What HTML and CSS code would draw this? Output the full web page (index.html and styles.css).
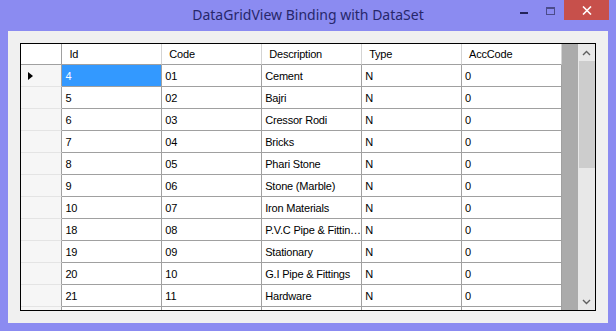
FILE: index.html
```html
<!DOCTYPE html>
<html lang="en">
<head>
    <meta charset="UTF-8">
    <meta name="viewport" content="width=device-width, initial-scale=1.0">
    <title>DataGridView Binding with DataSet</title>
    <link rel="stylesheet" href="styles.css">
</head>
<body>
    <div class="window">
        <div class="title-bar">
            <div class="spacer"></div>
            <div class="title">DataGridView Binding with DataSet</div>
            <div class="controls">
                <span class="btn-min"><i></i></span>
                <span class="btn-max"><i></i></span>
                <span class="btn-close">
                    <svg width="10" height="9" viewBox="0 0 10 9"><path d="M1 0.5 L9 8.5 M9 0.5 L1 8.5" stroke="#fff" stroke-width="1.6"/></svg>
                </span>
            </div>
        </div>
        <div class="client">
            <div class="grid">
                <div class="grid-body">
                    <table id="itemTable">
                        <thead>
                            <tr>
                                <th class="corner"></th>
                                <th>Id</th>
                                <th>Code</th>
                                <th>Description</th>
                                <th>Type</th>
                                <th>AccCode</th>
                            </tr>
                        </thead>
                        <tbody></tbody>
                    </table>
                </div>
                <div class="vscroll">
                    <div class="arrow">
                        <svg width="9" height="6" viewBox="0 0 9 6"><path d="M1 5 L4.5 1.5 L8 5" fill="none" stroke="#606060" stroke-width="1.4"/></svg>
                    </div>
                    <div class="track"><div class="thumb"></div></div>
                    <div class="arrow">
                        <svg width="9" height="6" viewBox="0 0 9 6"><path d="M1 1 L4.5 4.5 L8 1" fill="none" stroke="#606060" stroke-width="1.4"/></svg>
                    </div>
                </div>
            </div>
        </div>
    </div>
    <script>
    const items = [
        [4, '01', 'Cement'],
        [5, '02', 'Bajri'],
        [6, '03', 'Cressor Rodi'],
        [7, '04', 'Bricks'],
        [8, '05', 'Phari Stone'],
        [9, '06', 'Stone (Marble)'],
        [10, '07', 'Iron Materials'],
        [18, '08', 'P.V.C Pipe & Fittings'],
        [19, '09', 'Stationary'],
        [20, '10', 'G.I Pipe & Fittings'],
        [21, '11', 'Hardware']
    ];

    const tbody = document.querySelector('#itemTable tbody');
    items.forEach((item, index) => {
        const current = index === 0;
        const row = `<tr>
            <td class="row-head">${current ? '<span class="pointer"></span>' : ''}</td>
            <td class="${current ? 'selected' : ''}">${item[0]}</td>
            <td>${item[1]}</td>
            <td>${item[2].replace('&', '&amp;')}</td>
            <td>N</td>
            <td>0</td>
        </tr>`;
        tbody.insertAdjacentHTML('beforeend', row);
    });
    // next row is scrolled out of view, only its top edge shows
    tbody.insertAdjacentHTML('beforeend', '<tr><td class="row-head"></td><td></td><td></td><td></td><td></td><td></td></tr>');
    </script>
</body>
</html>
```

FILE: styles.css
```css
body {
    margin: 0;
    background-color: #8b8bf1;
    font-family: "Liberation Sans", Arial, sans-serif;
}

.window {
    width: 616px;
    height: 331px;
}

.title-bar {
    height: 31px;
    display: grid;
    grid-template-columns: 1fr auto 1fr;
}

.title {
    font-family: "Noto Sans", "Open Sans", sans-serif;
    font-size: 14px;
    color: #27276b;
    line-height: 30px;
}

.controls {
    justify-self: end;
    display: flex;
    align-items: flex-start;
    margin-right: 7px;
}

.btn-min {
    width: 26px;
    height: 20px;
    display: flex;
    justify-content: center;
}

.btn-min i {
    width: 8px;
    height: 2px;
    margin-top: 12px;
    background-color: #23235a;
}

.btn-max {
    width: 27px;
    height: 20px;
    display: flex;
    justify-content: center;
}

.btn-max i {
    width: 7px;
    height: 5px;
    margin-top: 7px;
    border: 1px solid #4b4b8a;
    border-top-width: 2px;
}

.btn-close {
    width: 45px;
    height: 20px;
    background-color: #c7504b;
    display: flex;
    align-items: center;
    justify-content: center;
}

.client {
    margin: 0 8px;
    height: 292px;
    background-color: #f0f0f0;
    padding: 12px;
    box-sizing: border-box;
}

.grid {
    height: 268px;
    border: 1px solid #000;
    box-sizing: border-box;
    display: flex;
    background-color: #ababab;
}

.grid-body {
    flex: 1;
    overflow: hidden;
}

table {
    border-collapse: separate;
    border-spacing: 0;
    table-layout: fixed;
    width: 541px;
    font-size: 11px;
    letter-spacing: -0.2px;
    color: #000;
}

th, td {
    width: 99px;
    padding: 0 0 0 3px;
    border-right: 1px solid #a0a0a0;
    border-bottom: 1px solid #a0a0a0;
    background-color: #fff;
    text-align: left;
    font-weight: normal;
    white-space: nowrap;
    overflow: hidden;
    text-overflow: ellipsis;
    box-sizing: border-box;
}

th {
    height: 21px;
    padding-left: 7px;
    border-right-color: #d4d4d4;
}

td {
    height: 22px;
}

th.corner, td.row-head {
    width: 41px;
    padding: 0;
}

th.corner {
    border-right-color: #a0a0a0;
}

td.row-head {
    background-color: #f6f6f6;
    border-bottom-color: #e4e4e4;
}

td.selected {
    background-color: #3399ff;
    color: #fff;
}

.pointer {
    display: block;
    width: 0;
    height: 0;
    margin-left: 7px;
    border-left: 5px solid #000;
    border-top: 4px solid transparent;
    border-bottom: 4px solid transparent;
}

.vscroll {
    width: 17px;
    display: flex;
    flex-direction: column;
    background-color: #e8e8e8;
}

.arrow {
    height: 17px;
    display: flex;
    align-items: center;
    justify-content: center;
}

.track {
    flex: 1;
    padding-left: 1px;
}

.thumb {
    height: 107px;
    background-color: #cdcdcd;
}
```
